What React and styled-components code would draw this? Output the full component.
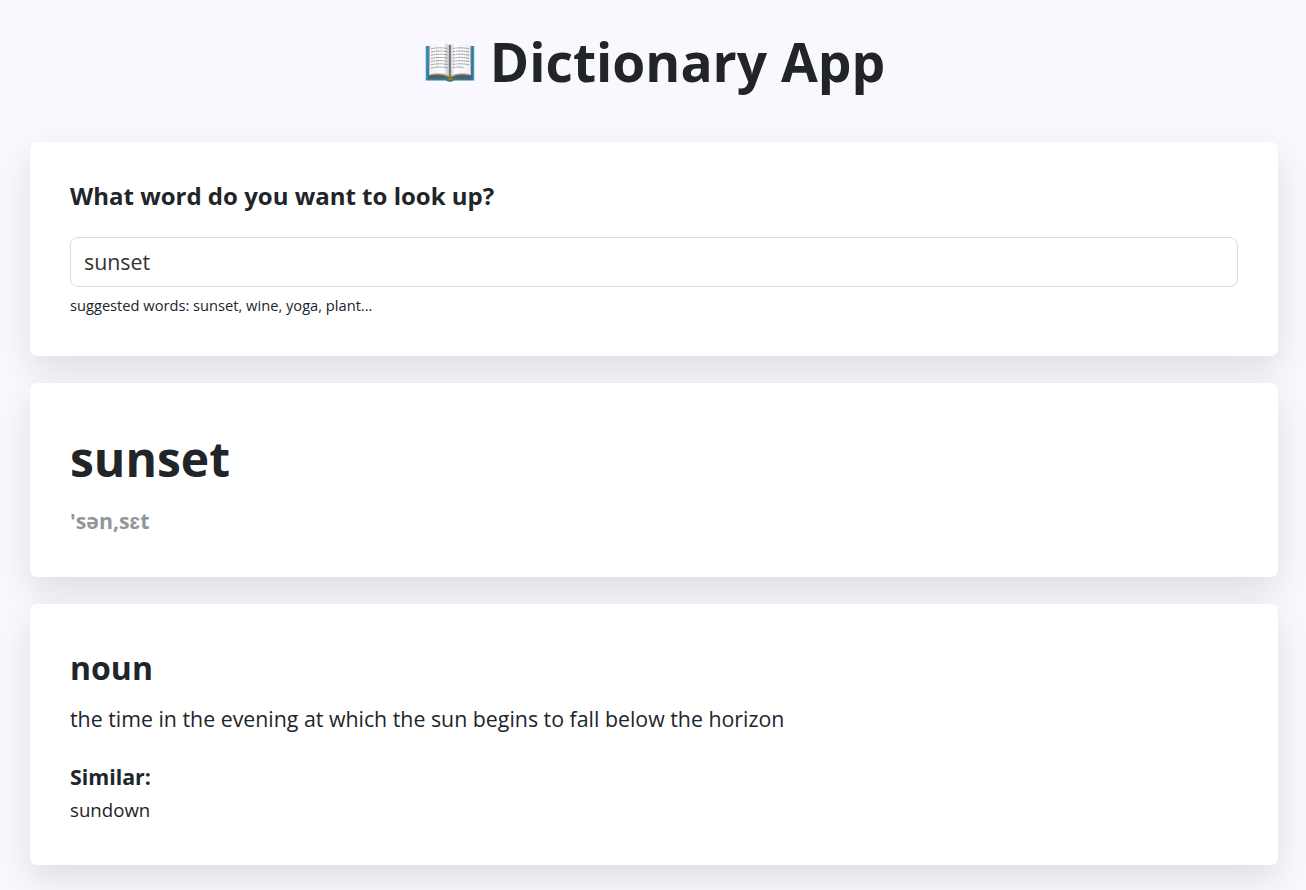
import React, { useState } from "react";
import styled, { createGlobalStyle } from "styled-components";

const GlobalStyle = createGlobalStyle`
  *, *::before, *::after { box-sizing: border-box; }
  html { background: #f9f8ff; }
  body {
    margin: 0;
    height: 890px;
    overflow: hidden;
    background: #f9f8ff;
    color: #212529;
    font-family: "Open Sans", "Noto Sans", sans-serif;
  }
  h1, h2, h3, h4, p { margin: 0; }
`;

const Page = styled.main`
  display: flex;
  flex-direction: column;
  gap: 27px;
  padding: 0 28px 0 30px;
`;

const Header = styled.header`
  display: flex;
  align-items: center;
  justify-content: center;
  gap: 15px;
  height: 115px;
  padding: 8px 0 0 2px;
`;

const BookIcon = styled.svg`
  width: 50px;
  height: 40px;
`;

const Title = styled.h1`
  font-size: 53.33px;
  line-height: 64px;
  font-weight: 700;
  white-space: nowrap;
`;

const Card = styled.section`
  height: ${({ $height }) => $height}px;
  padding: ${({ $top }) => $top}px 40px 0;
  border-radius: 7px;
  background: #fff;
  box-shadow: 0 14px 35px rgba(0, 0, 0, 0.11);
`;

const Label = styled.label`
  display: block;
  font-size: 24px;
  line-height: 32px;
  font-weight: 700;
`;

const SearchInput = styled.input`
  display: block;
  width: 100%;
  height: 50px;
  margin-top: 25px;
  padding: 0 13px 2px;
  border: 1px solid #dadada;
  border-radius: 8px;
  outline: none;
  color: #333;
  background: #fff;
  font: 400 21.33px "Open Sans", sans-serif;
`;

const Hint = styled.p`
  margin-top: 7px;
  font-size: 14.67px;
  line-height: 22px;
`;

const Word = styled.h2`
  font-size: 48px;
  line-height: 58px;
  font-weight: 700;
`;

const Phonetic = styled.p`
  margin-top: 20px;
  color: #939598;
  font-size: 21.33px;
  line-height: 26px;
  font-weight: 700;
`;

const OpenVowel = styled.span`
  font-family: "Liberation Sans", sans-serif;
  line-height: 1;
`;

const PartOfSpeech = styled.h3`
  font-size: 32px;
  line-height: 38px;
  font-weight: 700;
`;

const Definition = styled.p`
  margin-top: 16px;
  font-size: 21.33px;
  line-height: 32px;
`;

const SimilarHeading = styled.h4`
  margin-top: 29px;
  font-size: 21.33px;
  line-height: 26px;
  font-weight: 700;
`;

const Synonym = styled.p`
  margin-top: 6px;
  font-size: 18.67px;
  line-height: 28px;
`;

const textRows = [8, 11.2, 14.4, 17.6, 20.8, 24, 27.2];

function OpenBook() {
  return (
    <BookIcon viewBox="0 0 50 40" aria-hidden="true">
      <defs>
        <linearGradient id="cover" x2="1">
          <stop offset="0" stopColor="#499bc1" />
          <stop offset=".04" stopColor="#2585b3" />
          <stop offset=".96" stopColor="#28789d" />
          <stop offset="1" stopColor="#5aa7c9" />
        </linearGradient>
        <linearGradient id="leftPage" x2="1">
          <stop offset="0" stopColor="#f0f0f2" />
          <stop offset=".7" stopColor="#fff" />
          <stop offset="1" stopColor="#bfc0c3" />
        </linearGradient>
        <linearGradient id="rightPage" x2="1">
          <stop offset="0" stopColor="#d2d3d6" />
          <stop offset=".2" stopColor="#fff" />
          <stop offset="1" stopColor="#eeeff2" />
        </linearGradient>
        <linearGradient id="edge" x2="0" y2="1">
          <stop offset="0" stopColor="#a9a8a6" />
          <stop offset="1" stopColor="#55534e" />
        </linearGradient>
      </defs>
      <path d="M.7 4H49.3V38.6H29Q25 41 21 38.6H.7Z" fill="url(#cover)" />
      <path d="M3.6 4H46.4V33Q47 36.5 44 36.5H28L25 38 22 36.5H3.6Z" fill="url(#edge)" />
      <path d="M4 33.5Q17 31 24 35.5V33Q16 28 4 32ZM46 33.5Q33 31 26 35.5V33Q34 28 46 32Z" fill="#a9aaac" />
      <path d="M5 3Q18-1 24 3V33.5Q15 29.5 4.2 32.5Z" fill="url(#leftPage)" />
      <path d="M45 3Q32-1 26 3V33.5Q35 29.5 45.8 32.5Z" fill="url(#rightPage)" />
      <path d="M24 3Q25 2 26 3V35H24Z" fill="#77797c" />
      <path d="M21 36Q25 33 29 36L27.5 39H22.5Z" fill="#776a22" />
      <path d="M23.5 36.8H27" stroke="#c2a636" strokeWidth=".8" />
      <g fill="none" stroke="#777a80" strokeWidth=".8" strokeDasharray="2.3 .5 1.4 .6 3 .5">
        {textRows.map((y, index) => (
          <React.Fragment key={y}>
            <path d={`M6.2 ${y - 1.2}Q14 ${y - 3} 22.2 ${y - 1.5}`} />
            <path d={`M28 ${y - 1.5}Q36 ${y - 3} ${index === 6 ? 39 : 44} ${y - 1.2}`} />
          </React.Fragment>
        ))}
      </g>
    </BookIcon>
  );
}

export default function App() {
  const [query, setQuery] = useState("sunset");

  return (
    <>
      <GlobalStyle />
      <Page>
        <Header>
          <OpenBook />
          <Title>Dictionary App</Title>
        </Header>
        <Card $height={214} $top={38}>
          <Label htmlFor="word">What word do you want to look up?</Label>
          <SearchInput id="word" value={query} onChange={(event) => setQuery(event.target.value)} />
          <Hint>suggested words: sunset, wine, yoga, plant...</Hint>
        </Card>
        <Card $height={194} $top={47}>
          <Word>sunset</Word>
          <Phonetic>'sən,s<OpenVowel>ɛ</OpenVowel>t</Phonetic>
        </Card>
        <Card $height={261} $top={45}>
          <PartOfSpeech>noun</PartOfSpeech>
          <Definition>the time in the evening at which the sun begins to fall below the horizon</Definition>
          <SimilarHeading>Similar:</SimilarHeading>
          <Synonym>sundown</Synonym>
        </Card>
      </Page>
    </>
  );
}
